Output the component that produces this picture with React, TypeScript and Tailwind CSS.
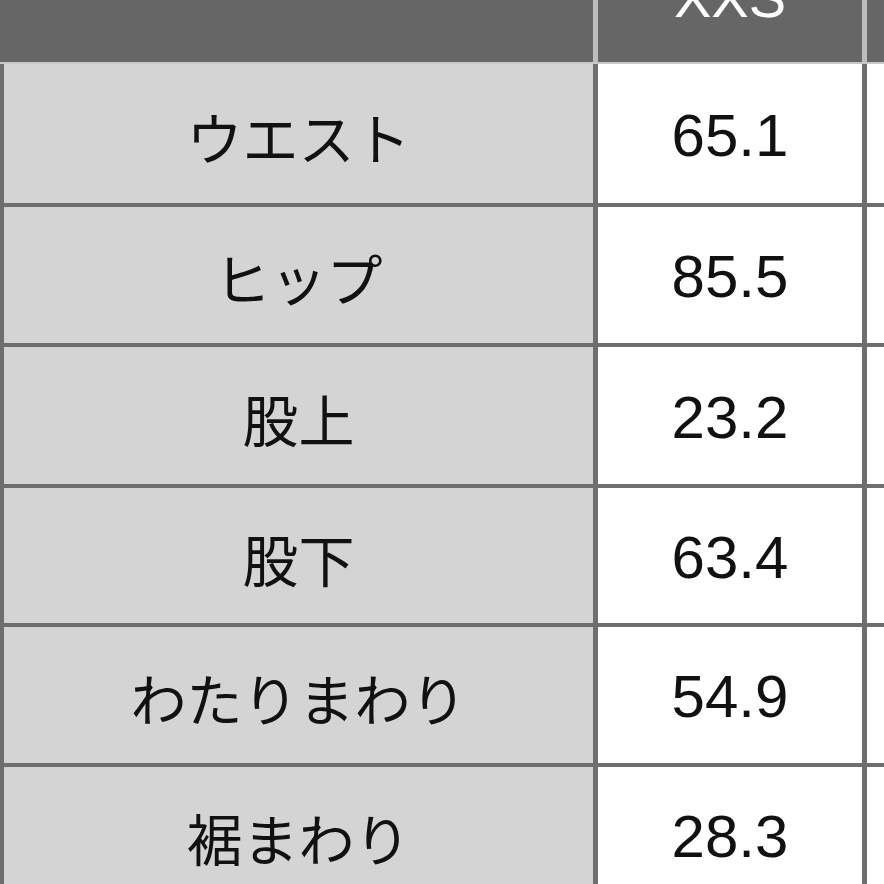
const rows = [
  { label: "ウエスト", value: "65.1", h: "h-[143px]" },
  { label: "ヒップ", value: "85.5", h: "h-[140px]" },
  { label: "股上", value: "23.2", h: "h-[141px]" },
  { label: "股下", value: "63.4", h: "h-[139px]" },
  { label: "わたりまわり", value: "54.9", h: "h-[140px]" },
  { label: "裾まわり", value: "28.3", h: "h-[140px]" },
];

export default function App() {
  return (
    <div className="w-[884px] h-[884px] overflow-hidden bg-white text-[#111]">
      {/* header, its top is cut off in the shot */}
      <div className="flex h-[64px] bg-[#666666] border-b-2 border-[#c8c8c8]">
        <div className="w-[593px]" />
        <div className="w-[5px] bg-[#bdbdbd]" />
        <div className="w-[264px] flex justify-center items-start overflow-hidden">
          <span className="-mt-[30px] text-[56px] leading-none text-white font-['Liberation_Sans',sans-serif]">
            XXS
          </span>
        </div>
        <div className="w-[5px] bg-[#bdbdbd]" />
        <div className="flex-1" />
      </div>

      {rows.map((r) => (
        <div key={r.label} className={`flex ${r.h} border-b-4 border-[#6e6e6e]`}>
          <div className="w-[598px] border-l-4 border-r-[5px] border-[#6e6e6e] bg-[#d4d4d4] flex items-center justify-center">
            <span className="mt-[4px] text-[56px] leading-none font-['Noto_Sans_CJK_JP',sans-serif]">
              {r.label}
            </span>
          </div>
          <div className="w-[269px] border-r-[5px] border-[#6e6e6e] bg-white flex items-center justify-center">
            <span className="mt-[4px] text-[60px] leading-none font-['Liberation_Sans',sans-serif]">
              {r.value}
            </span>
          </div>
          <div className="flex-1 bg-white" />
        </div>
      ))}
    </div>
  );
}
